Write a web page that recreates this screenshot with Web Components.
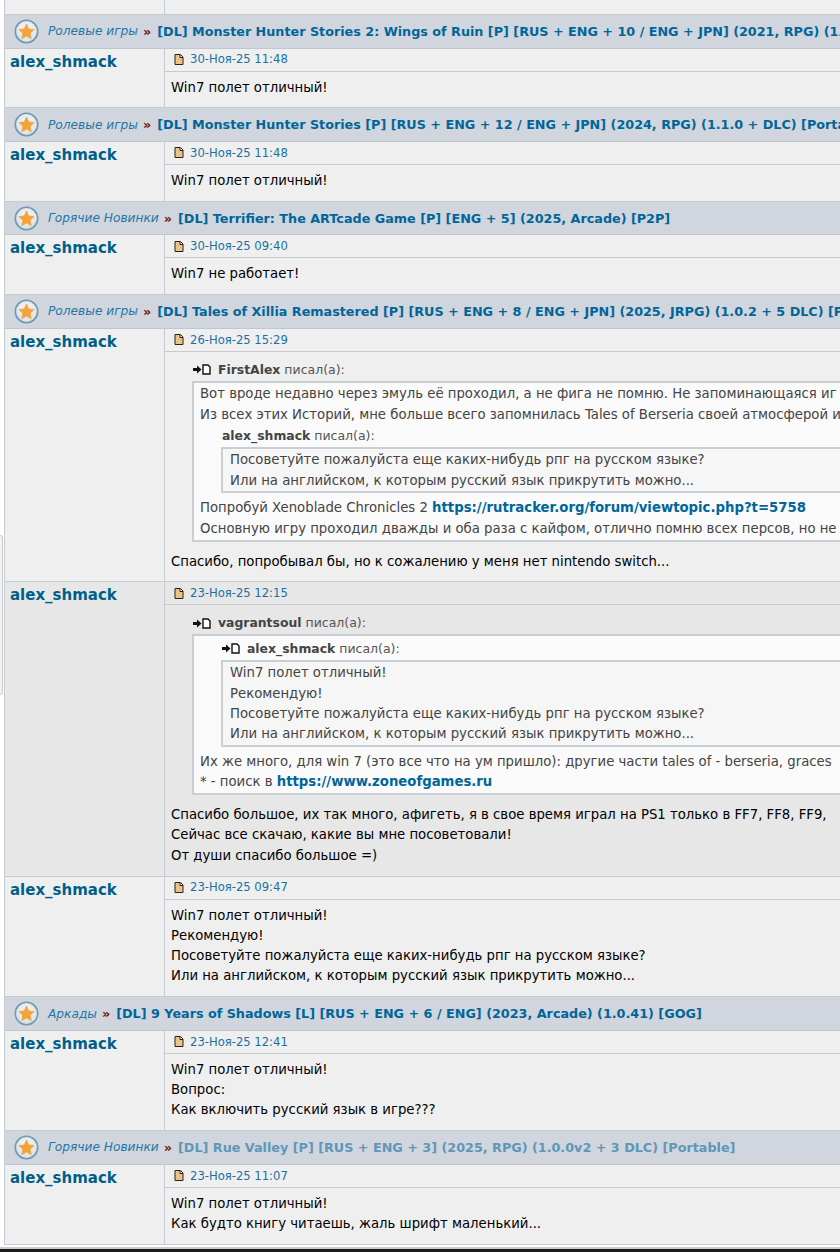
<!DOCTYPE html>
<html lang="ru">
<head>
<meta charset="utf-8">
<title>Forum posts</title>
<style>
  html, body { margin: 0; padding: 0; height: 1252px; overflow: hidden; background: #fff; }
  body { font: 13.25px "DejaVu Sans", Verdana, sans-serif; color: #000; position: relative; }
  a { color: #006699; font-weight: bold; text-decoration: none; }
  post-row.cut .cut-text { display: flex; gap: 43.5px; margin: -17px 0 0 17px; color: #222; }
</style>
</head>
<body>
<template id="post-icon">
  <svg width="10" height="11" viewBox="0 0 10 11"><path d="M1 .5h5.500l2.500 2.500v7.500H1z" fill="#e8c48c" stroke="#2a2015"/><path d="M6 1v2.500h3" fill="#fff" stroke="#2a2015"/></svg>
</template>

<forum-page>
  <post-row class="cut"><span class="cut-text"><span>р</span><span>р</span></span></post-row>

  <topic-head cat="Ролевые игры">[DL] Monster Hunter Stories 2: Wings of Ruin [P] [RUS + ENG + 10 / ENG + JPN] (2021, RPG) (1.5</topic-head>
  <post-row user="alex_shmack" date="30-Ноя-25 11:48">Win7 полет отличный!</post-row>

  <topic-head cat="Ролевые игры">[DL] Monster Hunter Stories [P] [RUS + ENG + 12 / ENG + JPN] (2024, RPG) (1.1.0 + DLC) [Porta</topic-head>
  <post-row user="alex_shmack" date="30-Ноя-25 11:48">Win7 полет отличный!</post-row>

  <topic-head cat="Горячие Новинки">[DL] Terrifier: The ARTcade Game [P] [ENG + 5] (2025, Arcade) [P2P]</topic-head>
  <post-row user="alex_shmack" date="30-Ноя-25 09:40">Win7 не работает!</post-row>

  <topic-head cat="Ролевые игры">[DL] Tales of Xillia Remastered [P] [RUS + ENG + 8 / ENG + JPN] (2025, JRPG) (1.0.2 + 5 DLC) [P</topic-head>
  <post-row user="alex_shmack" date="26-Ноя-25 15:29">
    <quote-box author="FirstAlex" icon>
      Вот вроде недавно через эмуль её проходил, а не фига не помню. Не запоминающаяся иг<br>
      Из всех этих Историй, мне больше всего запомнилась Tales of Berseria своей атмосферой и<br>
      <quote-box author="alex_shmack" nested>
        Посоветуйте пожалуйста еще каких-нибудь рпг на русском языке?<br>
        Или на английском, к которым русский язык прикрутить можно...
      </quote-box>
      Попробуй Xenoblade Chronicles 2 <a>https://rutracker.org/forum/viewtopic.php?t=5758</a><br>
      Основную игру проходил дважды и оба раза с кайфом, отлично помню всех персов, но не
    </quote-box>
    Спасибо, попробывал бы, но к сожалению у меня нет nintendo switch...
  </post-row>

  <post-row user="alex_shmack" date="23-Ноя-25 12:15" dark>
    <quote-box author="vagrantsoul" icon>
      <quote-box author="alex_shmack" icon nested>
        Win7 полет отличный!<br>
        Рекомендую!<br>
        Посоветуйте пожалуйста еще каких-нибудь рпг на русском языке?<br>
        Или на английском, к которым русский язык прикрутить можно...
      </quote-box>
      Их же много, для win 7 (это все что на ум пришло): другие части tales of - berseria, graces<br>
      * - поиск в <a>https://www.zoneofgames.ru</a>
    </quote-box>
    Спасибо большое, их так много, афигеть, я в свое время играл на PS1 только в FF7, FF8, FF9,<br>
    Сейчас все скачаю, какие вы мне посоветовали!<br>
    От души спасибо большое =)
  </post-row>

  <post-row user="alex_shmack" date="23-Ноя-25 09:47">
    Win7 полет отличный!<br>
    Рекомендую!<br>
    Посоветуйте пожалуйста еще каких-нибудь рпг на русском языке?<br>
    Или на английском, к которым русский язык прикрутить можно...
  </post-row>

  <topic-head cat="Аркады">[DL] 9 Years of Shadows [L] [RUS + ENG + 6 / ENG] (2023, Arcade) (1.0.41) [GOG]</topic-head>
  <post-row user="alex_shmack" date="23-Ноя-25 12:41">
    Win7 полет отличный!<br>
    Вопрос:<br>
    Как включить русский язык в игре???
  </post-row>

  <topic-head cat="Горячие Новинки" visited>[DL] Rue Valley [P] [RUS + ENG + 3] (2025, RPG) (1.0.0v2 + 3 DLC) [Portable]</topic-head>
  <post-row user="alex_shmack" date="23-Ноя-25 11:07">
    Win7 полет отличный!<br>
    Как будто книгу читаешь, жаль шрифт маленький...
  </post-row>
</forum-page>
<edge-tab></edge-tab>
<task-bar></task-bar>

<script>
class ForumPage extends HTMLElement {
  constructor() {
    super();
    this.attachShadow({ mode: 'open' });
    this.shadowRoot.innerHTML = `
      <style>
        :host {
          display: flex;
          flex-direction: column;
          width: 1300px;
          margin-left: 4px;
          border-left: 1px solid #c3cbd3;
          box-sizing: border-box;
          white-space: nowrap;
        }
      </style>
      <slot></slot>
    `;
  }
}

class TopicHead extends HTMLElement {
  constructor() {
    super();
    this.attachShadow({ mode: 'open' });
    const cat = this.getAttribute('cat') || '';
    this.shadowRoot.innerHTML = `
      <style>
        :host {
          display: flex;
          align-items: center;
          flex: none;
          height: 33.6px;
          box-sizing: border-box;
          padding-left: 9px;
          background: #d1d5dd;
          border-bottom: 1px solid #bfc6ce;
          font-size: 12.75px;
        }
        svg { flex: none; margin-right: 9px; }
        .cat { font-style: italic; font-size: 12.2px; color: #1f78a8; }
        .sep { color: #7a0d0d; font-weight: bold; margin: 0 6px 0 5px; }
        .title { color: #006699; font-weight: bold; }
        :host([visited]) .title { color: #5f97b8; }
      </style>
      <svg width="25" height="25" viewBox="0 0 25 25">
        <defs>
          <radialGradient id="g" cx="50%" cy="40%" r="60%">
            <stop offset="0" stop-color="#fbfbfb"/>
            <stop offset="1" stop-color="#d7dde4"/>
          </radialGradient>
        </defs>
        <circle cx="12.500" cy="12.500" r="11.200" fill="url(#g)" stroke="#6d9ab5" stroke-width="1.600"/>
        <path d="M12.500 5l2.300 4.900 5.300.7-3.900 3.700 1 5.300-4.700-2.600-4.700 2.600 1-5.300-3.900-3.700 5.300-.7z" fill="#f2a33c" stroke="#f2a33c" stroke-width=".8" stroke-linejoin="round"/>
      </svg>
      <span class="cat">${cat}</span><span class="sep">»</span><span class="title"><slot></slot></span>
    `;
  }
}

class PostRow extends HTMLElement {
  constructor() {
    super();
    this.attachShadow({ mode: 'open' });
    const user = this.getAttribute('user') || '';
    const date = this.getAttribute('date') || '';
    const icon = document.getElementById('post-icon').innerHTML;
    this.shadowRoot.innerHTML = `
      <style>
        :host {
          display: grid;
          grid-template-columns: 160px 1fr;
          flex: none;
          background: #efefef;
          border-bottom: 1px solid #c3cbd3;
          line-height: 20.3px;
        }
        :host([dark]) { background: #e7e7e7; }
        :host(.cut) { height: 14px; overflow: hidden; }
        .user {
          border-right: 1px solid #c3cbd3;
          padding: 3px 0 0 5px;
          font-size: 15px;
          font-weight: bold;
          color: #005f88;
          line-height: 20px;
        }
        .head {
          display: flex;
          align-items: center;
          gap: 6px;
          height: 23px;
          box-sizing: border-box;
          padding-left: 9px;
          border-bottom: 1px solid #c6c9cd;
          font-size: 11.6px;
          color: #1a6fa3;
        }
        .body { padding: 6px 0 9.500px 6px; }
        :host(.cut) .head { display: none; }
        :host(.cut) .body { padding: 0; }
      </style>
      <div class="user">${user}</div>
      <div class="main">
        <div class="head">${icon}<span>${date}</span></div>
        <div class="body"><slot></slot></div>
      </div>
    `;
  }
}

class QuoteBox extends HTMLElement {
  constructor() {
    super();
    this.attachShadow({ mode: 'open' });
    const author = this.getAttribute('author') || '';
    const arrow = this.hasAttribute('icon')
      ? `<svg width="18" height="11" viewBox="0 0 18 11">
           <path d="M0 4h4V1.500L8.500 5.500 4 9.500V7H0z" fill="#111"/>
           <path d="M10 1h5l2 2v7h-7z" fill="#fff" stroke="#111" stroke-width="1.400"/>
         </svg>`
      : '';
    this.shadowRoot.innerHTML = `
      <style>
        :host { display: block; margin: 1px 0 10px 21px; color: #444; line-height: 20.3px; }
        :host([nested]) { margin: 0 0 5px 21px; }
        .who {
          display: flex;
          align-items: center;
          gap: 7px;
          height: 22px;
          margin-left: 1px;
          font-size: 12.5px;
          color: #555;
        }
        .who b { font-size: 12.4px; color: #444; }
        .box {
          border: 2px solid #c9ced4;
          background: #fafafa;
          padding: 1.500px 0 .5px 6px;
        }
        :host([nested]) .box { background: #f6f6f6; padding-left: 7px; }
      </style>
      <div class="who">${arrow}<span><b>${author}</b> писал(а):</span></div>
      <div class="box"><slot></slot></div>
    `;
  }
}

class EdgeTab extends HTMLElement {
  constructor() {
    super();
    this.attachShadow({ mode: 'open' });
    this.shadowRoot.innerHTML = `
      <style>
        :host {
          position: absolute;
          left: 0;
          top: 535px;
          width: 3px;
          height: 160px;
          box-sizing: border-box;
          border: 1px solid #c8ccd0;
          border-left: 0;
          border-radius: 0 3px 3px 0;
          background: #f2f2f2;
        }
      </style>
    `;
  }
}

class TaskBar extends HTMLElement {
  constructor() {
    super();
    this.attachShadow({ mode: 'open' });
    this.shadowRoot.innerHTML = `
      <style>
        :host {
          position: absolute;
          left: 0;
          right: 0;
          top: 1247px;
          height: 5px;
          box-sizing: border-box;
          border-top: 2px solid #c8cdd3;
          background: #1c1c1c;
        }
      </style>
    `;
  }
}

customElements.define('forum-page', ForumPage);
customElements.define('topic-head', TopicHead);
customElements.define('post-row', PostRow);
customElements.define('quote-box', QuoteBox);
customElements.define('edge-tab', EdgeTab);
customElements.define('task-bar', TaskBar);
</script>
</body>
</html>
